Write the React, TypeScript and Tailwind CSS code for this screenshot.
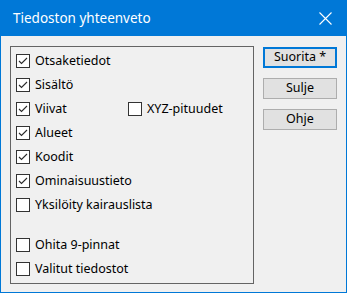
import React from 'react';

type Item = { label: string; checked: boolean };

const font = { fontFamily: '"Noto Sans", "Open Sans", sans-serif' };

const CheckBox = ({ checked }: { checked: boolean }) => (
    <span className="w-[14px] h-[14px] shrink-0 border border-[#333333] bg-white flex items-center justify-center">
        {checked && (
            <svg width="12" height="12" viewBox="0 0 12 12">
                <polyline points="2,6 4.5,8.5 10,3" fill="none" stroke="#2b2b2b" strokeWidth="1.1" />
            </svg>
        )}
    </span>
);

const Row = ({ label, checked }: Item) => (
    <div className="flex items-center gap-[5px]">
        <CheckBox checked={checked} />
        <span className="text-[12.5px] text-black leading-none whitespace-nowrap">{label}</span>
    </div>
);

const Button = ({ label, primary }: { label: string; primary?: boolean }) => (
    <div
        className={`w-[74px] h-[21px] bg-[#e1e1e1] flex items-center justify-center text-[12.5px] text-black leading-none ${
            primary ? 'border-2 border-[#0078d7]' : 'border border-[#adadad]'
        }`}
    >
        {label}
    </div>
);

export default function App() {
    const top: Item[] = [
        { label: 'Otsaketiedot', checked: true },
        { label: 'Sisältö', checked: true },
    ];
    const rest: Item[] = [
        { label: 'Alueet', checked: true },
        { label: 'Koodit', checked: true },
        { label: 'Ominaisuustieto', checked: true },
        { label: 'Yksilöity kairauslista', checked: false },
    ];

    return (
        <div className="w-[347px] h-[293px] bg-[#0078d7] p-px flex flex-col" style={font}>
            {/* Title bar */}
            <div className="h-[35px] shrink-0 flex items-center justify-between pl-[12px] pr-[14px]">
                <span className="text-white text-[13.5px]">Tiedoston yhteenveto</span>
                <svg width="13" height="13" viewBox="0 0 13 13">
                    <path d="M0.5 0.5 L12.5 12.5 M12.5 0.5 L0.5 12.5" stroke="#ffffff" strokeWidth="1.1" />
                </svg>
            </div>

            {/* Body */}
            <div className="flex-1 bg-[#f0f0f0] flex items-start">
                <div className="ml-[9px] mt-[10px] w-[244px] h-[238px] border border-[#646464] pl-[5px] pt-[2px] flex flex-col">
                    {top.map((it) => (
                        <div key={it.label} className="h-[24px] flex items-center">
                            <Row {...it} />
                        </div>
                    ))}
                    <div className="h-[24px] flex items-center">
                        <div className="w-[112px]">
                            <Row label="Viivat" checked />
                        </div>
                        <Row label="XYZ-pituudet" checked={false} />
                    </div>
                    {rest.map((it) => (
                        <div key={it.label} className="h-[24px] flex items-center">
                            <Row {...it} />
                        </div>
                    ))}
                    <div className="h-[16px]" />
                    <div className="h-[24px] flex items-center">
                        <Row label="Ohita 9-pinnat" checked={false} />
                    </div>
                    <div className="h-[24px] flex items-center">
                        <Row label="Valitut tiedostot" checked={false} />
                    </div>
                </div>

                <div className="ml-[9px] mt-[11px] flex flex-col gap-[10px]">
                    <Button label="Suorita *" primary />
                    <Button label="Sulje" />
                    <Button label="Ohje" />
                </div>
            </div>
        </div>
    );
}
